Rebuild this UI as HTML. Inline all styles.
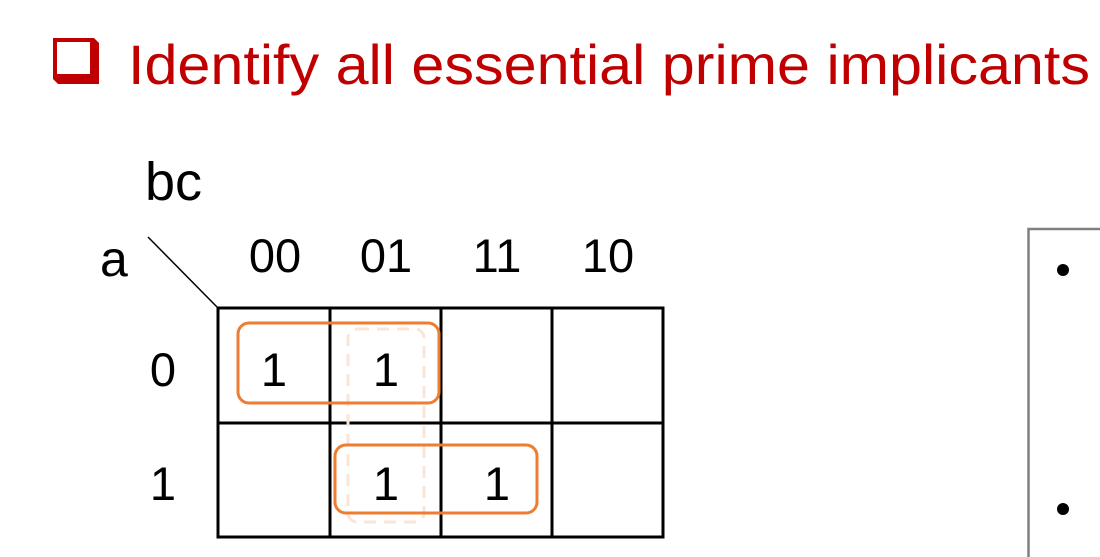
<!DOCTYPE html>
<html><head><meta charset="utf-8"><style>
html,body{margin:0;padding:0;background:#fff;width:1100px;height:557px;overflow:hidden}
svg{display:block}
text{font-family:"Liberation Sans",Arial,sans-serif}
</style></head><body>
<svg width="1100" height="557" viewBox="0 0 1100 557" xmlns="http://www.w3.org/2000/svg">
<path d="M53 38 H94 L99 43 V84 H58 L53 79 Z" fill="#c00000"/>
<rect x="57" y="42" width="33" height="32" fill="#fff"/>
<text x="128" y="84" font-size="56" fill="#c00000" textLength="962" lengthAdjust="spacingAndGlyphs">Identify all essential prime implicants</text>

<text x="145" y="200" font-size="54" fill="#000">bc</text>
<text x="100" y="276" font-size="50" fill="#000">a</text>
<line x1="148" y1="237" x2="217" y2="307" stroke="#000" stroke-width="1.5"/>
<g font-size="47" fill="#000" text-anchor="middle">
<text x="275" y="272">00</text>
<text x="386" y="272">01</text>
<text x="497" y="272">11</text>
<text x="608" y="272">10</text>
<text x="163" y="386">0</text>
<text x="163" y="500">1</text>
<text x="274" y="386">1</text>
<text x="386" y="386">1</text>
<text x="386" y="500">1</text>
<text x="497" y="500">1</text>
</g>

<g stroke="#000" stroke-width="3" fill="none">
<rect x="218" y="308" width="445" height="229"/>
<line x1="330" y1="308" x2="330" y2="537"/>
<line x1="441" y1="308" x2="441" y2="537"/>
<line x1="552" y1="308" x2="552" y2="537"/>
<line x1="218" y1="423" x2="663" y2="423"/>
</g>

<rect x="348" y="329" width="76" height="193" rx="9" fill="none" stroke="#fbe5d6" stroke-width="3" stroke-dasharray="12,8"/>
<rect x="238" y="323" width="201" height="80" rx="11" fill="none" stroke="#ed7d31" stroke-width="3"/>
<rect x="335" y="445" width="202" height="68" rx="11" fill="none" stroke="#ed7d31" stroke-width="3"/>

<path d="M1028.5 557 V229 H1100" fill="none" stroke="#808080" stroke-width="2.5"/>
<circle cx="1063" cy="270" r="6" fill="#000"/>
<circle cx="1063" cy="509" r="6" fill="#000"/>
</svg>
</body></html>
